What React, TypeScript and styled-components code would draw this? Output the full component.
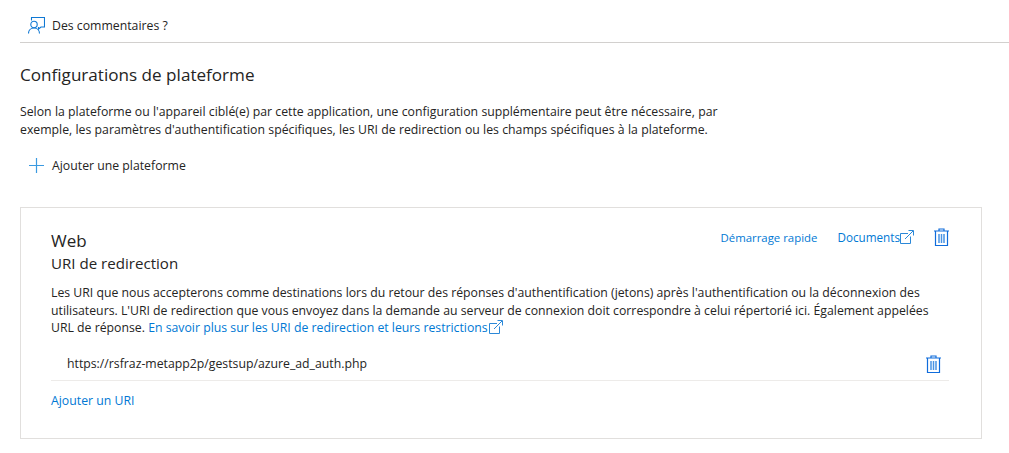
import styled, { createGlobalStyle } from 'styled-components';

const GlobalStyle = createGlobalStyle`
  html, body {
    margin: 0;
    padding: 0;
    background: #fff;
  }
  body {
    font-family: "Open Sans", "Noto Sans", "Liberation Sans", sans-serif;
    font-size: 12.27px;
    color: #252423;
  }
`;

const Page = styled.div`
  width: 1009px;
  height: 453px;
  overflow: hidden;
  padding-left: 20px;
  box-sizing: border-box;
`;

const Toolbar = styled.div`
  height: 43px;
  padding: 8px 0 0 8px;
  box-sizing: border-box;
  display: flex;
  align-items: center;
  gap: 7px;
  border-bottom: 1px solid #d2d0ce;
  margin-bottom: 20px;
`;

const Title = styled.h2`
  margin: 0 0 16px;
  font-size: 17.1px;
  line-height: 24px;
  font-weight: 400;
`;

const Text = styled.p`
  margin: 0;
  width: 720px;
  line-height: 18px;
  word-spacing: 0.1px;
`;

const AddRow = styled.div`
  display: flex;
  align-items: center;
  gap: 8px;
  height: 20px;
  margin: 16px 0 32px 9px;
`;

const Card = styled.section`
  width: 962px;
  height: 232px;
  box-sizing: border-box;
  border: 1px solid #e1dfdd;
  padding: 21px 32px 0 30px;
`;

const CardHead = styled.div`
  display: flex;
  justify-content: space-between;
  align-items: flex-start;
`;

const CardName = styled.div`
  font-size: 17px;
  line-height: 24px;
`;

const CardSub = styled.div`
  font-size: 15.1px;
  line-height: 20px;
`;

const Links = styled.div`
  display: flex;
  align-items: center;
  gap: 20px;
  margin-top: -1px;
`;

const Link = styled.a<{ $size?: number }>`
  color: #0078d4;
  display: inline;
  font-size: ${(p) => (p.$size ? `${p.$size}px` : 'inherit')};
`;

const DocLink = styled.span`
  display: inline-flex;
  align-items: center;
`;

const CardText = styled.p`
  margin: 11px 0 0;
  line-height: 17.5px;
  width: 880px;
`;

const InlineIcon = styled.span`
  margin-left: 1px;
  vertical-align: -2px;
  display: inline-block;
  line-height: 0;
`;

const UriRow = styled.div`
  display: flex;
  align-items: center;
  justify-content: space-between;
  width: 898px;
  height: 33px;
  margin-top: 11px;
  padding: 0 8px 0 16px;
  box-sizing: border-box;
  border-bottom: 1px solid #edebe9;
`;

const AddUri = styled.div`
  margin-top: 11px;
`;

const TrashIcon = () => (
  <svg width="15" height="18" viewBox="0 0 15 18" fill="none" stroke="#0f6cdb" strokeWidth="1.2">
    <path d="M0 3h15M1.5 3v14.5h12V3M5 3V1h5v2" />
    <path d="M5 6v9M7.5 6v9M10 6v9" stroke="#4a94e4" strokeWidth="1.5" />
  </svg>
);

const ExternalIcon = () => (
  <svg width="14" height="14" viewBox="0 0 14 14" fill="none" stroke="#2b88d8" strokeWidth="1">
    <path d="M8 3.5H0.5v10h10V6.5" />
    <path d="M5 9l8-8M8.5 0.5h5v5" />
  </svg>
);

const FeedbackIcon = () => (
  <svg width="17" height="17" viewBox="0 0 17 17" fill="none" stroke="#0f78d4" strokeWidth="1.1">
    <path d="M3.5 3.5V0.5h13v9.5H13l-2.5 2v-2" />
    <circle cx="6" cy="7.5" r="3.2" />
    <path d="M0.5 16.5c0-3 2.2-5.5 5.5-5.5s5.5 2.5 5.5 5.5" />
  </svg>
);

const PlusIcon = () => (
  <svg width="15" height="15" viewBox="0 0 15 15" fill="none" stroke="#3b9ae1" strokeWidth="1.2">
    <path d="M7.5 0v15M0 7.5h15" />
  </svg>
);

const App = () => {
  return (
    <Page>
      <GlobalStyle />
      <Toolbar>
        <FeedbackIcon />
        <span>Des commentaires ?</span>
      </Toolbar>
      <Title>Configurations de plateforme</Title>
      <Text>
        Selon la plateforme ou l'appareil ciblé(e) par cette application, une configuration supplémentaire peut être
        nécessaire, par exemple, les paramètres d'authentification spécifiques, les URI de redirection ou les champs
        spécifiques à la plateforme.
      </Text>
      <AddRow>
        <PlusIcon />
        <span>Ajouter une plateforme</span>
      </AddRow>
      <Card>
        <CardHead>
          <div>
            <CardName>Web</CardName>
            <CardSub>URI de redirection</CardSub>
          </div>
          <Links>
            <Link $size={11.4}>Démarrage rapide</Link>
            <DocLink>
              <Link $size={11.7}>Documents</Link>
              <ExternalIcon />
            </DocLink>
            <TrashIcon />
          </Links>
        </CardHead>
        <CardText>
          Les URI que nous accepterons comme destinations lors du retour des réponses d'authentification (jetons) après
          l'authentification ou la déconnexion des utilisateurs. L'URI de redirection que vous envoyez dans la demande
          au serveur de connexion doit correspondre à celui répertorié ici. Également appelées URL de réponse.{' '}
          <Link>En savoir plus sur les URI de redirection et leurs restrictions</Link>
          <InlineIcon>
            <ExternalIcon />
          </InlineIcon>
        </CardText>
        <UriRow>
          <span>https://rsfraz-metapp2p/gestsup/azure_ad_auth.php</span>
          <TrashIcon />
        </UriRow>
        <AddUri>
          <Link>Ajouter un URI</Link>
        </AddUri>
      </Card>
    </Page>
  );
};

export default App;
